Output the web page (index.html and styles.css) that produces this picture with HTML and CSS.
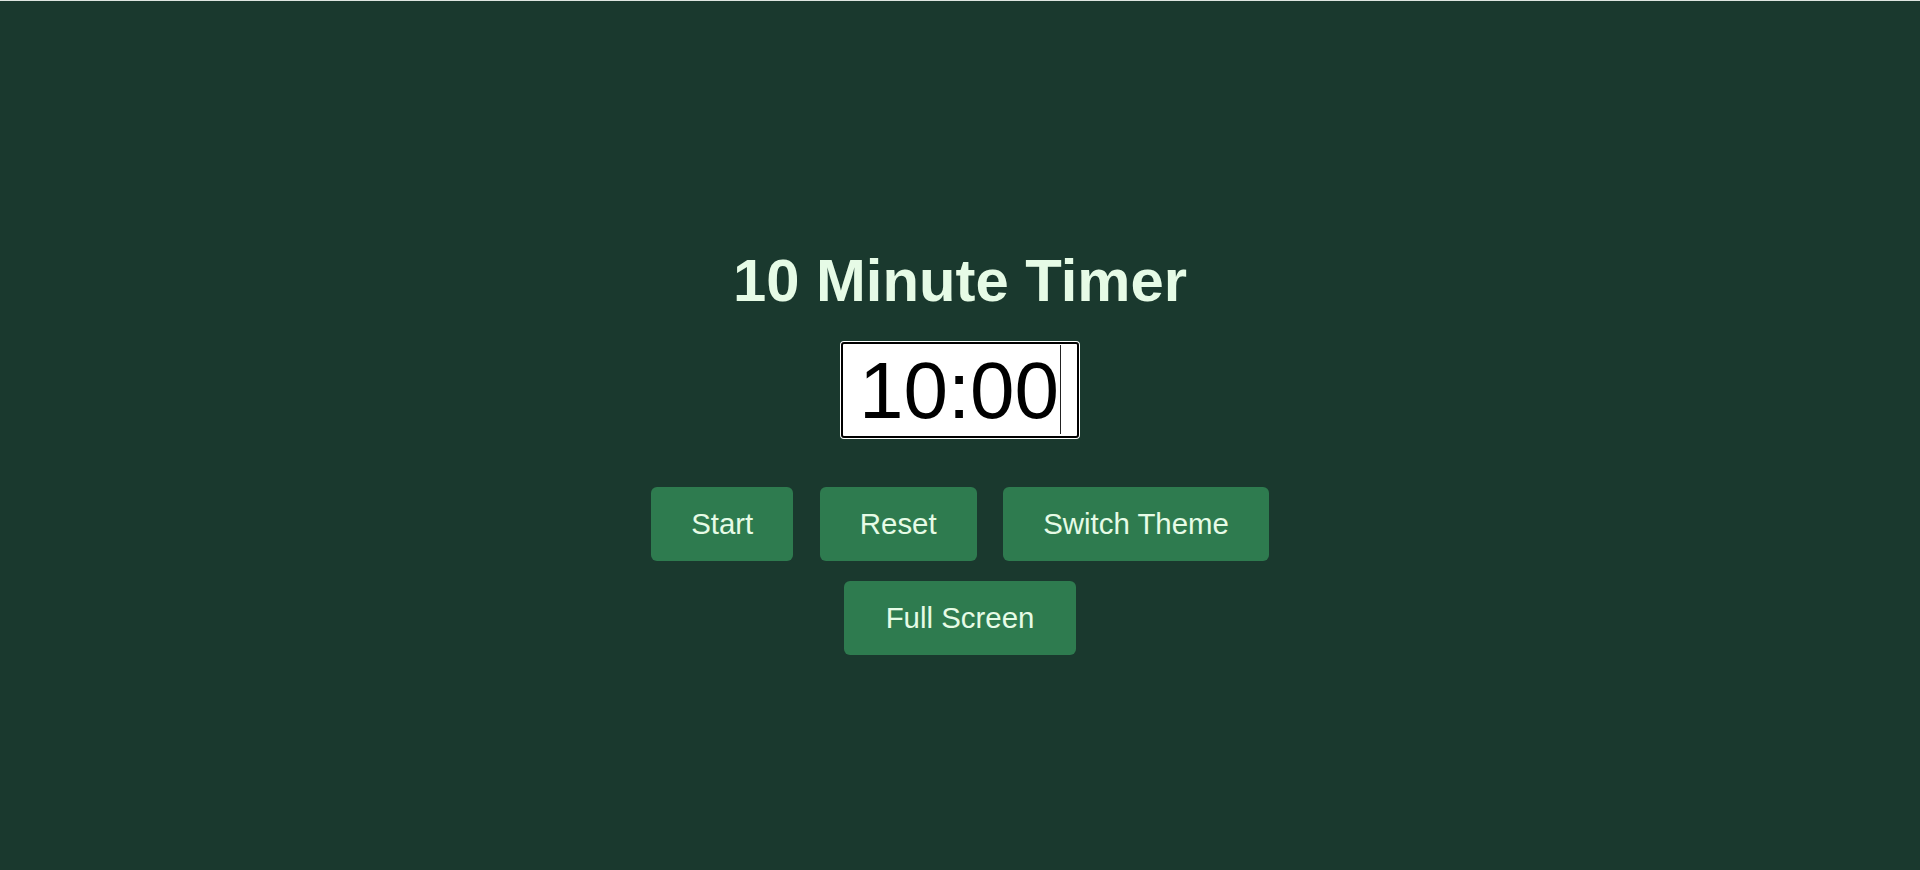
FILE: index.html
```html
<!DOCTYPE html>
<html lang="en">
<head>
<meta charset="utf-8">
<title>10 Minute Timer</title>
<link rel="stylesheet" href="styles.css">
</head>
<body>
<main class="timer-app">
  <h1 class="title">10 Minute Timer</h1>
  <div class="display"><span class="time">10:00</span><span class="caret"></span></div>
  <div class="controls">
    <div class="controls-row">
      <button class="btn" type="button">Start</button>
      <button class="btn" type="button">Reset</button>
      <button class="btn" type="button">Switch Theme</button>
    </div>
    <div class="controls-row">
      <button class="btn btn-wide" type="button">Full Screen</button>
    </div>
  </div>
</main>
</body>
</html>
```
FILE: styles.css
```css
html {
  background: #1a392e;
}
body {
  margin: 0;
  min-height: 869px;
  border-top: 1px solid #dfe5e1;
  background: #1a392e;
  font-family: "Liberation Sans", Arial, sans-serif;
}
.timer-app {
  display: flex;
  flex-direction: column;
  align-items: center;
  padding-top: 246px;
}
.title {
  margin: 0;
  font-size: 59.8px;
  line-height: 68px;
  font-weight: 700;
  color: #e6fbe6;
}
.display {
  margin-top: 27px;
  display: flex;
  align-items: flex-start;
  box-sizing: border-box;
  height: 96px;
  padding: 1px 16px 0 16px;
  background: #fff;
  border: 2px solid #000;
  border-radius: 3px;
  box-shadow: 0 0 0 1px #fff;
}
.time {
  font-size: 80px;
  line-height: 92px;
  color: #000;
}
.caret {
  width: 1px;
  height: 89px;
  margin-left: 1px;
  background: #222;
}
.controls {
  margin-top: 49px;
  display: flex;
  flex-direction: column;
  align-items: center;
  gap: 20px;
}
.controls-row {
  display: flex;
  justify-content: center;
  gap: 26.6px;
}
.btn {
  font-family: "Liberation Sans", Arial, sans-serif;
  font-size: 29.4px;
  line-height: normal;
  padding: 20px 40px;
  border: none;
  border-radius: 6px;
  background: #2e7b4f;
  color: #e6fbe6;
  cursor: pointer;
}
.btn-wide {
  padding: 20px 41.5px;
}
```
